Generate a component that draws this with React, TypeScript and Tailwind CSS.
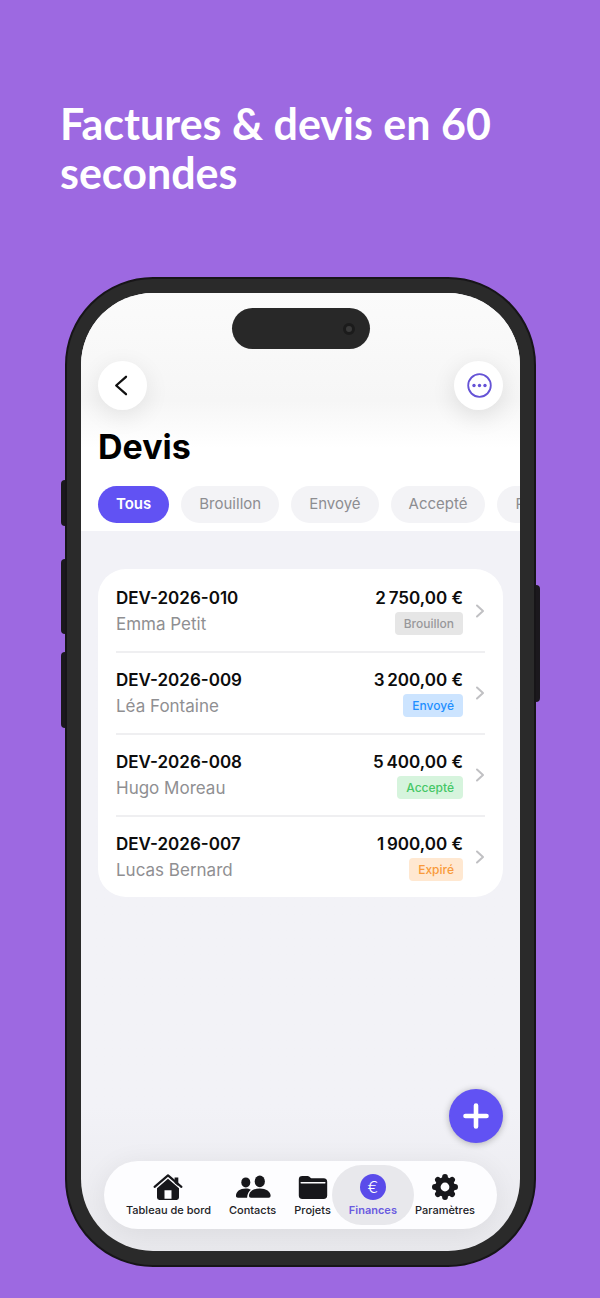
import type { ReactNode } from "react";

const filters = ["Tous", "Brouillon", "Envoyé", "Accepté", "Refusé"];

const quotes = [
  {
    id: "DEV-2026-010",
    client: "Emma Petit",
    amount: "2\u202f750,00 €",
    status: "Brouillon",
    badge: "bg-[#e6e6e6] text-[#98989b]",
  },
  {
    id: "DEV-2026-009",
    client: "Léa Fontaine",
    amount: "3\u202f200,00 €",
    status: "Envoyé",
    badge: "bg-[#cce4ff] text-[#1f8fff]",
  },
  {
    id: "DEV-2026-008",
    client: "Hugo Moreau",
    amount: "5\u202f400,00 €",
    status: "Accepté",
    badge: "bg-[#d6f4dd] text-[#45c766]",
  },
  {
    id: "DEV-2026-007",
    client: "Lucas Bernard",
    amount: "1\u202f900,00 €",
    status: "Expiré",
    badge: "bg-[#ffe8d1] text-[#f99a3a]",
  },
];

function HomeIcon() {
  return (
    <svg viewBox="0 0 30 28" className="h-7 w-[30px]" fill="none" aria-hidden="true">
      <path d="M21.6 4.4h3.7v8.600l-3.700-3z" fill="#17171b" />
      <path
        d="M1.600 13.800 15 2.400l13.400 11.400"
        stroke="#17171b"
        strokeWidth="2.200"
        strokeLinecap="round"
        strokeLinejoin="round"
      />
      <path
        d="M15 5.800 4 15.200v9.400A2.400 2.400 0 0 0 6.400 27h17.200a2.400 2.400 0 0 0 2.400-2.400v-9.400z"
        fill="#17171b"
      />
      <path d="M11.500 17.200h7v8.600h-7z" fill="#fdfdff" />
    </svg>
  );
}

function ContactsIcon() {
  return (
    <svg viewBox="0 0 36 28" className="h-7 w-9" fill="#17171b" aria-hidden="true">
      <ellipse cx="10.800" cy="9.400" rx="4.500" ry="5" />
      <path d="M1 23c0-4.400 3.800-7.400 9.800-7.400 2 0 3.600.4 5 1.100-2.200 1.700-3.500 4.200-3.700 8H3c-1.300 0-2-.6-2-1.700z" />
      <ellipse cx="24.800" cy="8.400" rx="5.100" ry="5.800" />
      <path d="M14 22.800c0-4.200 4.500-7.400 10.800-7.400s10.800 3.200 10.800 7.400c0 1.300-.7 1.900-2 1.900H16c-1.300 0-2-.6-2-1.900z" />
    </svg>
  );
}

function FolderIcon() {
  return (
    <svg viewBox="0 0 30 28" className="h-7 w-[30px]" aria-hidden="true">
      <path
        d="M.8 6.400C.8 4.200 2 3 4.400 3h4.400c1.400 0 2.100.3 2.900 1l.8.7c.6.4 1 .6 1.800.6h11.300c2.400 0 3.600 1.200 3.600 3.400v13.900c0 2.200-1.200 3.400-3.600 3.400H4.400C2 26 .8 24.800.8 22.600z"
        fill="#17171b"
      />
      <path d="M3.200 9.700h23.600" stroke="#fdfdff" strokeWidth="1.500" strokeLinecap="round" />
    </svg>
  );
}

function EuroIcon() {
  return (
    <span className="flex size-[26px] items-center justify-center rounded-full bg-[#5a4bea] text-base leading-none font-light text-white">
      €
    </span>
  );
}

function GearIcon() {
  return (
    <svg viewBox="0 0 28 28" className="size-7" aria-hidden="true">
      <g stroke="#17171b" strokeWidth="5.800" strokeLinecap="round">
        <path d="M14 3.900v20.200M3.900 14h20.200M6.900 6.900l14.200 14.200M21.100 6.900 6.900 21.100" />
      </g>
      <circle cx="14" cy="14" r="10" fill="#17171b" />
      <circle cx="14" cy="14" r="4.400" fill="#fdfdff" />
    </svg>
  );
}

const tabs: { label: string; icon: ReactNode; active?: boolean }[] = [
  { label: "Tableau de bord", icon: <HomeIcon /> },
  { label: "Contacts", icon: <ContactsIcon /> },
  { label: "Projets", icon: <FolderIcon /> },
  { label: "Finances", icon: <EuroIcon />, active: true },
  { label: "Paramètres", icon: <GearIcon /> },
];

export default function App() {
  return (
    <div className="flex min-h-screen flex-col bg-[#9d69e1] pt-[99px] pb-[31px] font-['Inter',sans-serif] antialiased">
      <h1 className="px-[60px] font-['Lato',sans-serif] text-[43px] leading-[49px] font-bold text-white">
        Factures & devis en 60 secondes
      </h1>

      <div className="relative mt-20 mr-16 ml-[65px] flex flex-1 flex-col rounded-[88px] border-2 border-[#171518] bg-[#2a2a2a] p-[14px]">
        <span className="absolute top-[201px] -left-[6px] h-[46px] w-1 rounded-l-sm bg-[#1b181d]" />
        <span className="absolute top-[280px] -left-[6px] h-[75px] w-1 rounded-l-sm bg-[#1b181d]" />
        <span className="absolute top-[373px] -left-[6px] h-[76px] w-1 rounded-l-sm bg-[#1b181d]" />
        <span className="absolute top-[306px] -right-[6px] h-[117px] w-1 rounded-r-sm bg-[#1b181d]" />

        <div className="flex flex-1 flex-col overflow-hidden rounded-[72px] bg-linear-to-b from-[#f2f2f7] from-85% to-[#e9e9ed]">
          <header className="bg-linear-to-b from-[#fbfbfb] via-[#f6f6f6] via-45% to-white to-65% pt-[15px] pb-2">
            <div className="mx-auto flex h-[41px] w-[138px] items-center justify-end rounded-full bg-[#282828] pr-[15px]">
              <span className="size-3 rounded-full border-[3px] border-[#1b1b1b] bg-[#3a3a3a]" />
            </div>

            <div className="mt-3 flex items-center justify-between px-[17px]">
              <button
                type="button"
                aria-label="Retour"
                className="flex size-[49px] items-center justify-center rounded-full bg-white shadow-[0_6px_24px_rgba(0,0,0,0.09)]"
              >
                <svg viewBox="0 0 24 24" className="size-6" fill="none" aria-hidden="true">
                  <path
                    d="M15 2.800 5.200 11.500 15 20.200"
                    stroke="#111"
                    strokeWidth="2.300"
                    strokeLinecap="round"
                    strokeLinejoin="round"
                  />
                </svg>
              </button>
              <button
                type="button"
                aria-label="Options"
                className="flex size-[49px] items-center justify-center rounded-full bg-white shadow-[0_6px_24px_rgba(0,0,0,0.11)]"
              >
                <svg viewBox="0 0 26 26" className="size-[26px]" fill="#6553d6" aria-hidden="true">
                  <circle cx="13.500" cy="12.500" r="11.300" fill="none" stroke="#6553d6" strokeWidth="1.800" />
                  <circle cx="8" cy="12.500" r="1.700" />
                  <circle cx="13.500" cy="12.500" r="1.700" />
                  <circle cx="19" cy="12.500" r="1.700" />
                </svg>
              </button>
            </div>

            <h2 className="mt-[15px] px-[17px] text-[34px] leading-[44px] font-bold text-black">
              Devis
            </h2>

            <div className="mt-[17px] flex gap-3 overflow-hidden pl-[17px] text-[15px]">
              {filters.map((filter, i) => (
                <button
                  key={filter}
                  type="button"
                  className={`h-[37px] shrink-0 rounded-full px-[18px] ${
                    i === 0
                      ? "bg-[#6152f3] font-semibold text-white"
                      : "bg-[#f3f3f6] text-[#8d8d91]"
                  }`}
                >
                  {filter}
                </button>
              ))}
            </div>
          </header>

          <main className="flex flex-1 flex-col px-[17px] pt-[38px]">
            <ul className="rounded-[28px] bg-white px-[18px]">
              {quotes.map((quote) => (
                <li key={quote.id} className="border-t-2 border-[#efeff1] first:border-transparent">
                  <a href="#" className="flex h-20 items-center">
                    <div className="flex-1">
                      <p className="text-[17px] leading-[26px] font-semibold text-[#0c0c0c]">
                        {quote.id}
                      </p>
                      <p className="text-[17px] leading-[26px] text-[#8f8f92]">{quote.client}</p>
                    </div>
                    <div className="flex flex-col items-end pb-1">
                      <p className="text-[17px] leading-[28px] font-semibold text-[#0c0c0c]">
                        {quote.amount}
                      </p>
                      <span
                        className={`rounded px-[9px] text-xs leading-[23px] font-medium ${quote.badge}`}
                      >
                        {quote.status}
                      </span>
                    </div>
                    <svg viewBox="0 0 10 16" className="ml-3 h-4 w-[10px]" fill="none" aria-hidden="true">
                      <path
                        d="M2 2.500 8 8l-6 5.500"
                        stroke="#c0c0c3"
                        strokeWidth="2"
                        strokeLinecap="round"
                        strokeLinejoin="round"
                      />
                    </svg>
                  </a>
                </li>
              ))}
            </ul>

            <button
              type="button"
              aria-label="Nouveau devis"
              className="mt-auto ml-auto flex size-[54px] items-center justify-center rounded-full bg-[#6152f3] shadow-[0_1px_7px_rgba(0,0,0,0.28)]"
            >
              <svg viewBox="0 0 26 26" className="size-[26px]" aria-hidden="true">
                <path d="M13 2.500v21M2.500 13h21" stroke="#fff" strokeWidth="4.600" strokeLinecap="round" />
              </svg>
            </button>
          </main>

          <nav className="mx-[23px] mt-[18px] mb-[22px] flex h-[68px] items-center justify-center gap-[18px] rounded-full bg-[#fdfdff] shadow-[0_4px_28px_rgba(0,0,0,0.07)]">
            {tabs.map((tab) => (
              <a
                key={tab.label}
                href="#"
                aria-current={tab.active ? "page" : undefined}
                className={`relative flex flex-col items-center text-[11px] leading-4 whitespace-nowrap ${
                  tab.active ? "font-semibold text-[#6a5be0]" : "font-medium text-[#222226]"
                }`}
              >
                {tab.active && (
                  <span className="absolute -inset-x-[17px] -inset-y-[7px] rounded-full bg-[#e8e8ec]" />
                )}
                <span className="relative flex h-[30px] items-center">{tab.icon}</span>
                <span className="relative">{tab.label}</span>
              </a>
            ))}
          </nav>
        </div>
      </div>
    </div>
  );
}
